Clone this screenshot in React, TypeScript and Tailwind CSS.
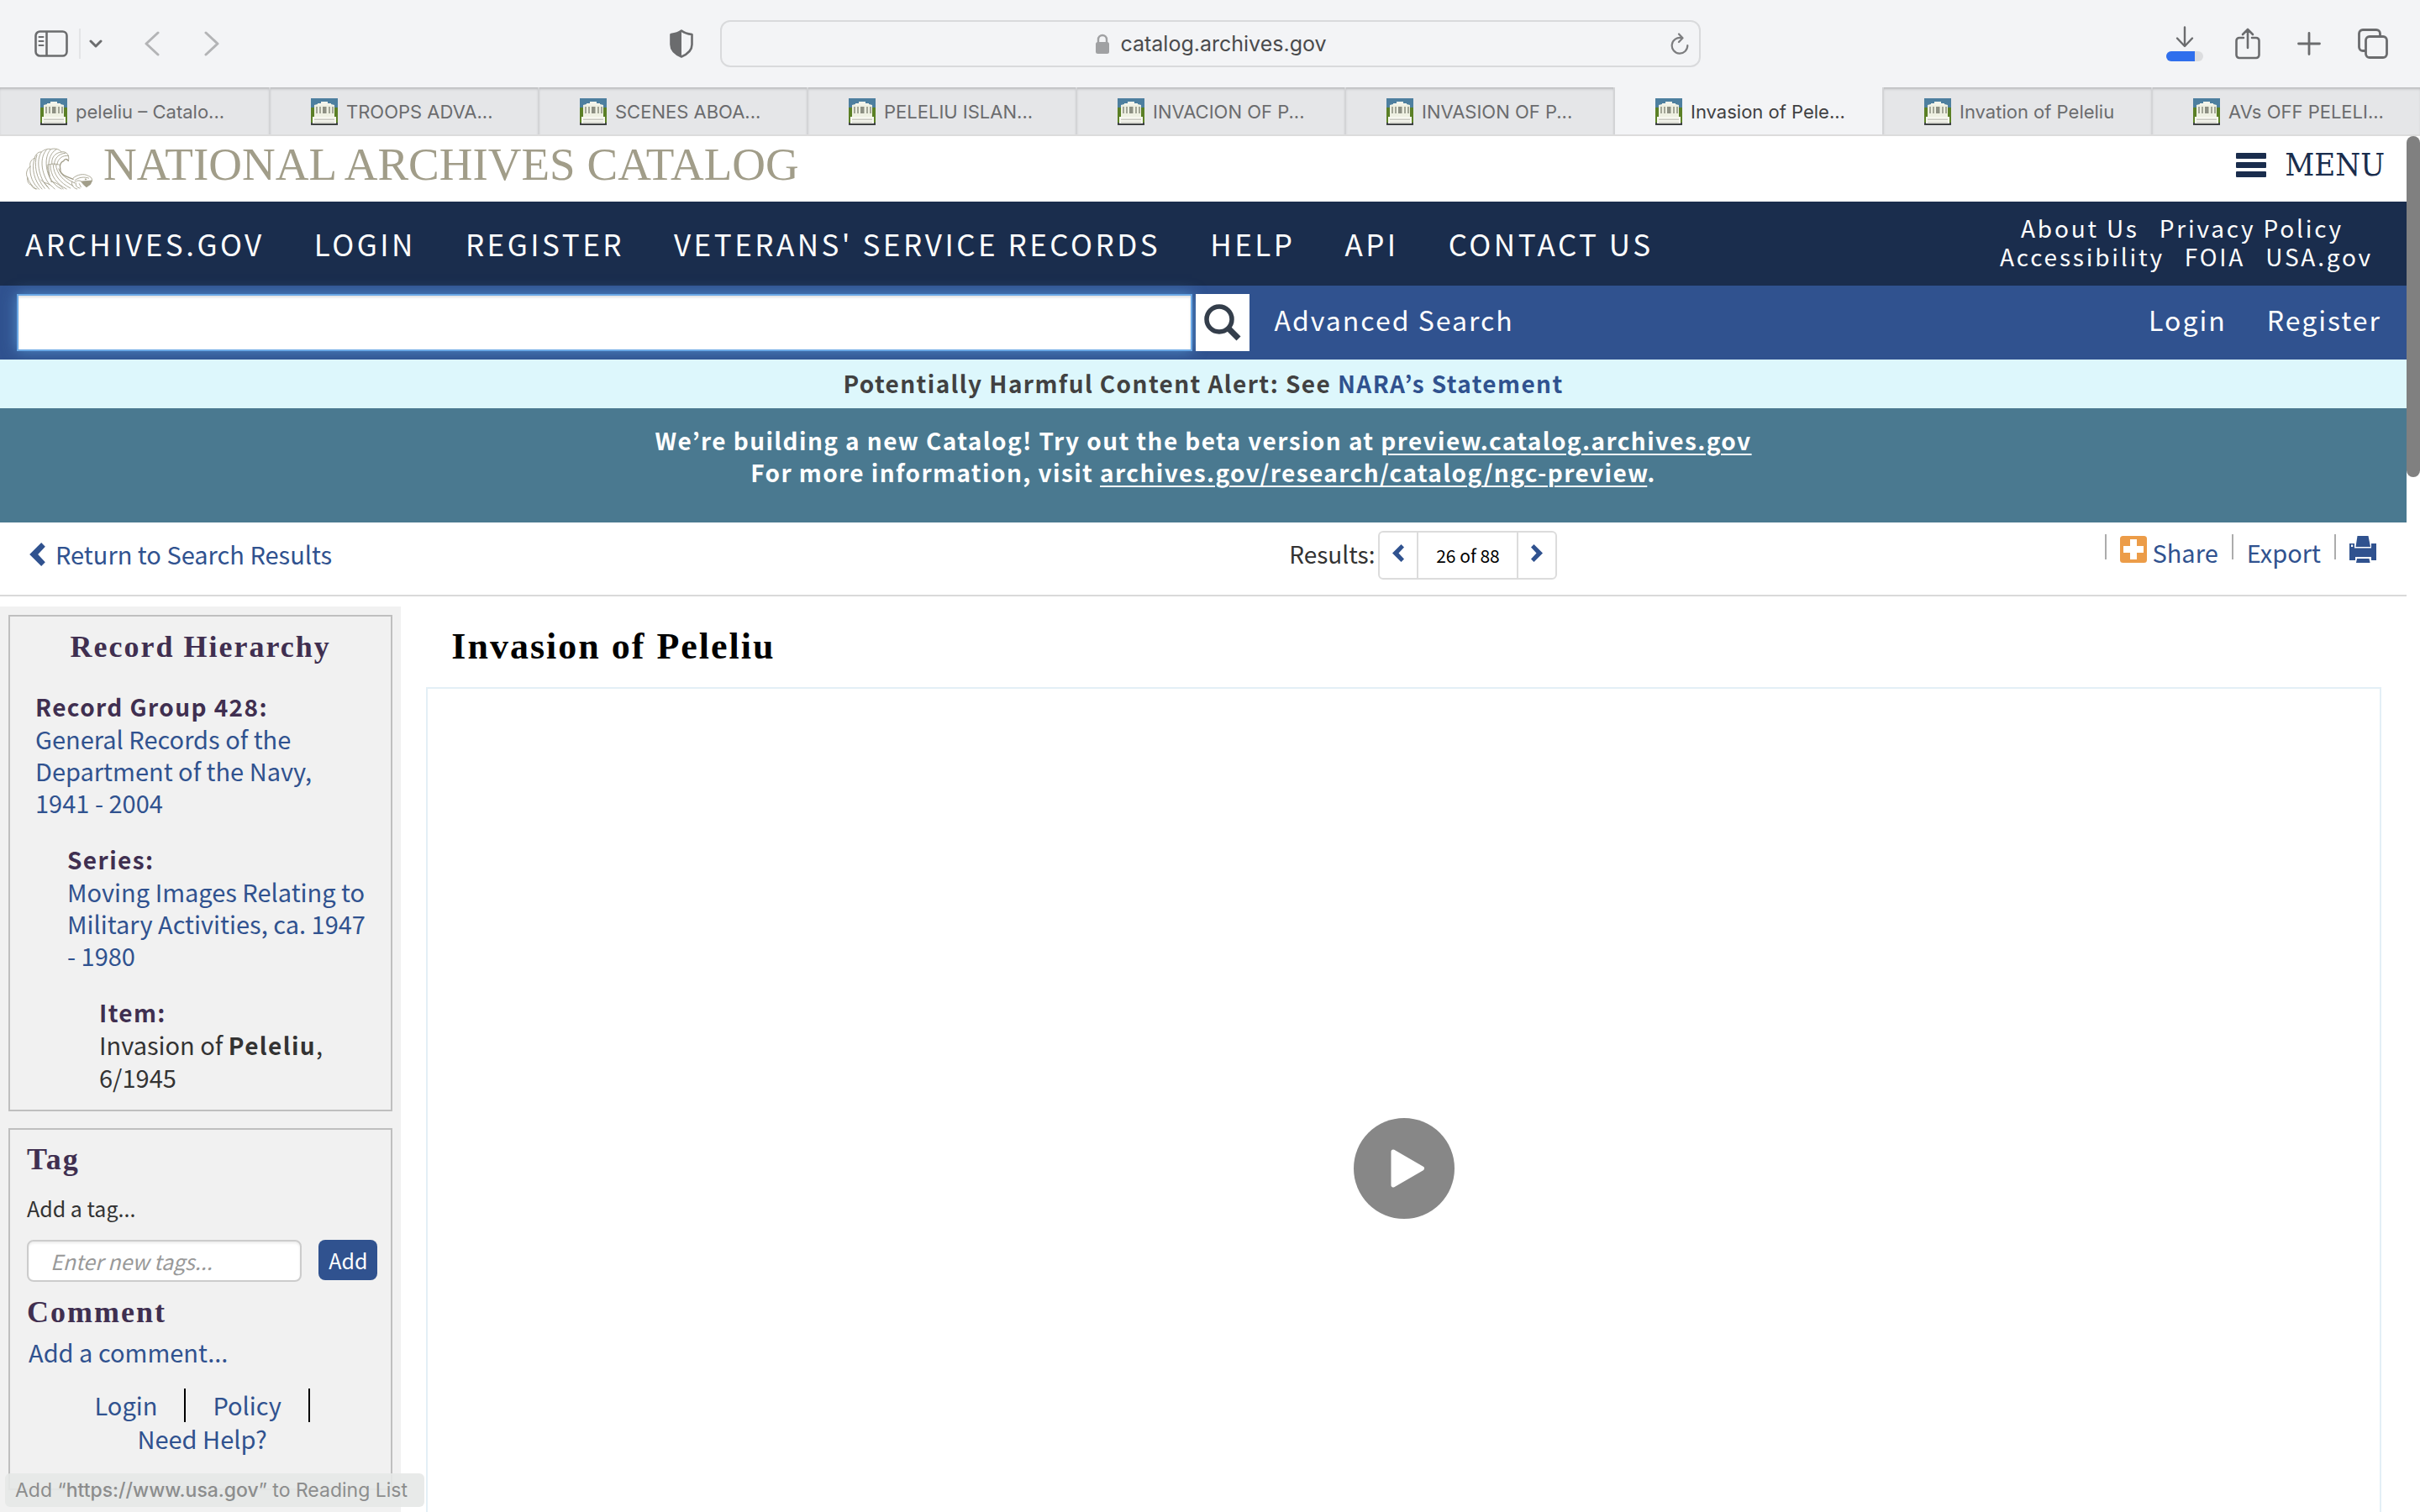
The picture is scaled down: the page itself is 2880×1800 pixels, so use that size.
import React from 'react';

const tabs = [
  'peleliu – Catalo...',
  'TROOPS ADVA...',
  'SCENES ABOA...',
  'PELELIU ISLAN...',
  'INVACION OF P...',
  'INVASION OF P...',
  'Invasion of Pele...',
  'Invation of Peleliu',
  'AVs OFF PELELI...',
];
const activeTab = 6;

const navLinks = ['ARCHIVES.GOV', 'LOGIN', 'REGISTER', "VETERANS' SERVICE RECORDS", 'HELP', 'API', 'CONTACT US'];

function Favicon() {
  return (
    <svg viewBox="0 0 32 32" className="size-8 shrink-0" aria-hidden="true">
      <rect width="32" height="32" fill="#4d7f9f" />
      <rect y="11" width="32" height="19" fill="#5b8026" />
      <rect y="29" width="32" height="3" fill="#3f4244" />
      <path d="M4 9V8l4-1V6h4V4h8v2h4v1l4 1v1z" fill="#f3f4ea" />
      <rect x="4" y="8" width="24" height="15" fill="#eef0e2" />
      <path d="M6 10h2v8H6zM10 10h2v8h-2zM21 10h2v8h-2zM25 10h2v8h-2z" fill="#a3a697" />
      <path d="M14 10h4.500v8H14z" fill="#8d9083" />
      <rect x="2" y="22" width="28" height="8" fill="#f6f7ef" />
      <path d="M4 24.500h24v1.500H4zM4 28h24v1H4z" fill="#c9cac2" />
    </svg>
  );
}

function EagleLogo() {
  return (
    <svg viewBox="28 222 244 154" className="h-[51px] w-[81px] shrink-0" fill="none" stroke="#a19d89" strokeWidth="2.600" strokeLinecap="round" aria-hidden="true">
      <path d="M183 272C189 250 174 236 158 240C150 228 130 226 120 230C108 226 92 234 86 240C72 238 62 254 62 262C50 266 42 280 46 292C34 300 28 318 36 332C34 344 40 358 50 358C52 368 60 372 70 373" />
      <path d="M140 230C112 246 106 284 116 326" />
      <path d="M120 230C98 250 96 304 124 348" />
      <path d="M104 233C80 256 82 316 116 358" />
      <path d="M86 240C66 268 74 330 108 366" />
      <path d="M70 250C58 284 66 334 98 371" />
      <path d="M62 262C48 296 60 345 88 373" />
      <path d="M46 292C42 325 56 355 78 374" />
      <path d="M36 332C42 350 54 364 66 373" />
      <path d="M158 240C134 242 120 262 124 284" />
      <path d="M172 244C146 246 132 264 132 286" />
      <path d="M183 254C162 250 144 264 142 286" />
      <path d="M106 288C118 280 140 282 150 286" />
      <path d="M108 292C108 330 130 360 158 373" />
      <path d="M118 286C118 326 142 356 176 373" />
      <path d="M128 286C130 322 152 350 190 370" />
      <path d="M138 286C140 316 164 344 200 362" />
      <path d="M148 300C152 318 176 338 206 352" />
      <path d="M96 350C112 352 124 362 134 373M84 340C96 350 108 362 114 373" />
      <path d="M120 346C140 350 156 360 164 373" />
      <path d="M183 272C176 262 168 266 166 272C154 276 150 290 154 302C152 312 162 324 176 328L200 338" strokeWidth="4" />
      <path d="M200 334C214 320 240 317 252 325C264 328 272 338 266 346" />
      <path d="M206 342C220 330 240 328 256 334M204 350C212 342 222 340 230 346" />
      <path d="M196 346C192 358 200 370 214 373M210 352C208 362 214 368 224 370M222 354L228 366" />
      <path d="M230 346L268 343L262 356L248 366L238 358Z" fill="#a19d89" />
      <circle cx="245" cy="338" r="2" fill="#a19d89" />
    </svg>
  );
}

function Chevron({ dir, className }: { dir: 'left' | 'right'; className: string }) {
  return (
    <svg viewBox="0 0 14 21" className={className} aria-hidden="true">
      {dir === 'left' ? (
        <path d="M10.500 0L14 3.500L7.500 10.500L14 17.500L10.500 21L0 10.500Z" fill="#30528f" />
      ) : (
        <path d="M3.500 0L0 3.500L6.500 10.500L0 17.500L3.500 21L14 10.500Z" fill="#30528f" />
      )}
    </svg>
  );
}

function BrowserToolbar() {
  return (
    <header className="flex h-[104px] shrink-0 items-center bg-[#f3f4f6] px-[38px] text-[#6b6c6e]">
      <div className="flex flex-1 items-center">
        <button aria-label="Show sidebar" className="flex w-[46px] justify-center">
          <svg viewBox="0 0 40 32" className="h-8 w-10" fill="none" stroke="currentColor" strokeWidth="2.600">
            <rect x="1.500" y="1.500" width="37" height="29" rx="5" />
            <path d="M14.500 1.500v29" />
            <path d="M5.500 8h5M5.500 13h5M5.500 18h5" strokeWidth="2" strokeLinecap="round" />
          </svg>
        </button>
        <span className="ml-2.5 h-9 w-0.5 bg-[#e3e4e6]" />
        <button aria-label="Sidebar options" className="ml-2.5">
          <svg viewBox="0 0 16 10" className="h-2.5 w-4" fill="none" stroke="currentColor" strokeWidth="3" strokeLinecap="round" strokeLinejoin="round">
            <path d="M2 2l6 6 6-6" />
          </svg>
        </button>
        <button aria-label="Back" className="ml-[50px]">
          <svg viewBox="0 0 18 30" className="h-[30px] w-[18px]" fill="none" stroke="#b3b4b6" strokeWidth="3" strokeLinecap="round" strokeLinejoin="round">
            <path d="M16 2L2 15l14 13" />
          </svg>
        </button>
        <button aria-label="Forward" className="ml-[53px]">
          <svg viewBox="0 0 18 30" className="h-[30px] w-[18px]" fill="none" stroke="#b3b4b6" strokeWidth="3" strokeLinecap="round" strokeLinejoin="round">
            <path d="M2 2l14 13L2 28" />
          </svg>
        </button>
        <button aria-label="Privacy report" className="mr-8 ml-auto">
          <svg viewBox="0 0 28 34" className="h-[34px] w-7">
            <path d="M14 1.500C17 4 22 5.500 26.500 6V18C26.500 25 21 29.500 14 32.500C7 29.500 1.500 25 1.500 18V6C6 5.500 11 4 14 1.500Z" fill="none" stroke="currentColor" strokeWidth="2.600" strokeLinejoin="round" />
            <path d="M14 1.500V32.500C7 29.500 1.500 25 1.500 18V6C6 5.500 11 4 14 1.500Z" fill="currentColor" />
          </svg>
        </button>
      </div>
      <div className="flex h-14 w-[1167px] items-center rounded-xl border-2 border-[#d9dadc] px-3">
        <div className="flex flex-1 items-center justify-center gap-3 pl-6">
          <svg viewBox="0 0 18 24" className="h-6 w-[18px]" aria-hidden="true">
            <path d="M4 11V7a5 5 0 0 1 10 0v4" fill="none" stroke="#a0a1a3" strokeWidth="2.400" />
            <rect x="1" y="10" width="16" height="14" rx="2.500" fill="#a0a1a3" />
          </svg>
          <span className="text-[25px] leading-8 text-[#4a4b4d]">catalog.archives.gov</span>
        </div>
        <button aria-label="Reload">
          <svg viewBox="0 0 22 26" className="h-[26px] w-[22px]" fill="none" stroke="#7c7d7f" strokeWidth="2.200" strokeLinecap="round" strokeLinejoin="round">
            <path d="M13 6.200A9.300 9.300 0 1 0 20.300 15M10 1.500L14.500 6.300L10 11" />
          </svg>
        </button>
      </div>
      <div className="flex flex-1 items-center justify-end gap-11">
        <button aria-label="Downloads" className="-mr-1.5 flex flex-col items-center gap-1">
          <svg viewBox="0 0 22 26" className="h-[26px] w-[22px]" fill="none" stroke="currentColor" strokeWidth="2.400" strokeLinecap="round" strokeLinejoin="round">
            <path d="M11 1.500v22M2 14.500l9 9.500 9-9.500" />
          </svg>
          <span className="flex h-3 w-11 overflow-hidden rounded-full bg-[#dcdddf]">
            <span className="w-[34px] bg-[#2f6fed]" />
          </span>
        </button>
        <button aria-label="Share page">
          <svg viewBox="0 0 30 38" className="h-[38px] w-[30px]" fill="none" stroke="currentColor" strokeWidth="2.600" strokeLinecap="round" strokeLinejoin="round">
            <path d="M10 12H5a3.500 3.500 0 0 0-3.500 3.500v17A3.500 3.500 0 0 0 5 36h20a3.500 3.500 0 0 0 3.500-3.500v-17A3.500 3.500 0 0 0 25 12h-5M15 24V2M9 8l6-6 6 6" />
          </svg>
        </button>
        <button aria-label="New tab">
          <svg viewBox="0 0 28 28" className="size-7" fill="none" stroke="currentColor" strokeWidth="2.800" strokeLinecap="round">
            <path d="M14 1.500v25M1.500 14h25" />
          </svg>
        </button>
        <button aria-label="Show all tabs">
          <svg viewBox="0 0 36 36" className="size-9" fill="none" stroke="currentColor" strokeWidth="2.800" strokeLinejoin="round">
            <rect x="9.500" y="9.500" width="25" height="25" rx="4.500" />
            <path d="M9.500 26.500H6A4.500 4.500 0 0 1 1.500 22V6A4.500 4.500 0 0 1 6 1.500h16A4.500 4.500 0 0 1 26.500 6v3.500" />
          </svg>
        </button>
      </div>
    </header>
  );
}

function TabBar() {
  return (
    <nav aria-label="Tabs" className="grid h-[58px] shrink-0 grid-cols-9 border-b-2 border-[#dcdcdc] text-[22px] leading-8">
      {tabs.map((t, i) => (
        <button
          key={t}
          className={
            i === activeTab
              ? 'flex items-center gap-2.5 border-l-2 border-[#d3d4d6] bg-[#f3f4f6] pt-0.5 pl-12 whitespace-nowrap text-[#3f4042] first:border-l-0'
              : 'flex items-center gap-2.5 border-l-2 border-[#d3d4d6] bg-[#e5e6e8] pt-0.5 pl-12 whitespace-nowrap text-[#6b6c6e] shadow-[inset_0_3px_3px_-1px_#b9babc] first:border-l-0'
          }
        >
          <Favicon />
          {t}
        </button>
      ))}
    </nav>
  );
}

function SiteHeader() {
  return (
    <>
      <div className="flex h-[78px] items-start justify-between pr-[26px] pl-[30px]">
        <a href="#home" className="flex items-start pt-[13px] text-[#a19d89]">
          <EagleLogo />
          <span className="ml-3 font-['Liberation_Serif',serif] text-[55px] leading-[42px]">NATIONAL ARCHIVES CATALOG</span>
        </a>
        <button className="flex items-center gap-[22px] pt-2.5 text-[#1a2d4d]">
          <span className="flex w-9 flex-col gap-1">
            <span className="h-[7px] rounded-[1px] bg-[#1a2d4d]" />
            <span className="h-[7px] rounded-[1px] bg-[#1a2d4d]" />
            <span className="h-[7px] rounded-[1px] bg-[#1a2d4d]" />
          </span>
          <span className="font-['DejaVu_Serif_Condensed','DejaVu_Serif',serif] text-[38px] leading-[48px]">MENU</span>
        </button>
      </div>
      <nav className="flex h-[100px] items-center justify-between bg-[#1a2d4d] pr-10 pl-[30px] text-white">
        <ul className="flex gap-[59px] text-[35px] leading-[44px] tracking-widest">
          {navLinks.map((l) => (
            <li key={l}>
              <a href="#nav">{l}</a>
            </li>
          ))}
        </ul>
        <div className="flex flex-col items-center pb-1 text-[28px] leading-[34px] tracking-widest">
          <div className="flex gap-6 pr-2.5">
            <a href="#about">About Us</a>
            <a href="#privacy">Privacy Policy</a>
          </div>
          <div className="flex gap-6">
            <a href="#accessibility">Accessibility</a>
            <a href="#foia">FOIA</a>
            <a href="#usa">USA.gov</a>
          </div>
        </div>
      </nav>
      <form className="flex h-[88px] items-center bg-[#30528f] pr-[30px] pl-5 text-[32px] leading-10 tracking-[2px] text-white" onSubmit={(e) => e.preventDefault()}>
        <input
          aria-label="Search the catalog"
          className="h-[68px] w-[49.7%] border-2 border-[#6ba8e5] bg-white px-4 text-[#333333] shadow-[0_0_16px_rgba(102,175,233,0.6),inset_0_2px_3px_rgba(0,0,0,0.12)] outline-none"
        />
        <button aria-label="Search" className="ml-1 flex h-[68px] w-16 items-center justify-center bg-white">
          <svg viewBox="0 0 44 44" className="size-11" fill="none" stroke="#343e4b" aria-hidden="true">
            <circle cx="18" cy="18" r="15" strokeWidth="5.500" />
            <path d="M28 28L41 41" strokeWidth="7" />
          </svg>
        </button>
        <a href="#advanced" className="ml-[30px] pb-2">Advanced Search</a>
        <div className="ml-auto flex gap-12 pb-2">
          <a href="#login">Login</a>
          <a href="#register">Register</a>
        </div>
      </form>
      <p className="h-[58px] bg-[#ddf7fc] text-center text-[28px] leading-[56px] font-bold tracking-wider text-[#414141]">
        Potentially Harmful Content Alert: See <a href="#statement" className="text-[#30528f]">NARA’s Statement</a>
      </p>
      <p className="h-[136px] bg-[#4a7990] pt-[19px] text-center text-[28px] leading-[38px] font-bold tracking-wider text-white">
        We’re building a new Catalog! Try out the beta version at <a href="#preview" className="underline decoration-2 underline-offset-4">preview.catalog.archives.gov</a>
        <br />
        For more information, visit <a href="#ngc" className="underline decoration-2 underline-offset-4">archives.gov/research/catalog/ngc-preview</a>.
      </p>
    </>
  );
}

function ResultsBar() {
  return (
    <div className="grid h-[88px] grid-cols-[15fr_13fr] border-b-2 border-[#d9d9d9] text-[29px] leading-[38px]">
      <a href="#results" className="flex items-start gap-3 pt-[18px] pl-[35px] text-[#30528f]">
        <Chevron dir="left" className="mt-1.5 h-[28px] w-[19px]" />
        Return to Search Results
      </a>
      <div className="flex items-start justify-between pr-9">
        <div className="flex items-start pt-2.5">
          <span className="pt-2 pr-1 text-[28px] text-[#333333]">Results:</span>
          <div className="flex h-[58px] rounded-md border-2 border-[#dcdcdc]">
            <button aria-label="Previous result" className="flex w-11 justify-center pt-3.5">
              <Chevron dir="left" className="h-[21px] w-3.5" />
            </button>
            <span className="w-[121px] border-x-2 border-[#dcdcdc] pt-2 text-center text-[21px] text-black">26 of 88</span>
            <button aria-label="Next result" className="flex w-11 justify-center pt-3.5">
              <Chevron dir="right" className="h-[21px] w-3.5" />
            </button>
          </div>
        </div>
        <div className="flex items-start pt-3.5 text-[#30528f]">
          <span className="h-[30px] w-0.5 bg-[#acacac]" />
          <button className="ml-4 flex items-start gap-1.5">
            <svg viewBox="0 0 32 32" className="mt-0.5 size-8" aria-hidden="true">
              <rect width="32" height="32" rx="3.500" fill="#ec9c48" />
              <path d="M12 4h8v8h8v8h-8v8h-8v-8H4v-8h8z" fill="#fff" />
            </svg>
            <span className="pt-0.5">Share</span>
          </button>
          <span className="ml-4 h-[30px] w-0.5 bg-[#acacac]" />
          <button className="ml-4 pt-0.5">Export</button>
          <span className="ml-4 h-[30px] w-0.5 bg-[#acacac]" />
          <button aria-label="Print" className="mt-0.5 ml-4">
            <svg viewBox="0 0 32 32" className="size-8" fill="#30528f">
              <path d="M9.500 0h13l2.500 13H7.500z" />
              <path fillRule="evenodd" d="M0 9h6v5.500h20V9h6v20h-6v-4H7v4H0zM2 10.500v2.500h2.200v-2.500z" />
              <path d="M9 27h14.500l1 5H8z" />
            </svg>
          </button>
        </div>
      </div>
    </div>
  );
}

function HierarchyLabel({ children }: { children: React.ReactNode }) {
  return <h3 className="text-[28px] font-bold tracking-wider text-[#402f50]">{children}</h3>;
}

const sideHeading = "font-['Liberation_Serif',serif] text-[36px] leading-[48px] font-bold tracking-[2px] text-[#402f50]";

function Sidebar() {
  return (
    <aside className="w-1/6 shrink-0 bg-[#f1f1f1] p-2.5 text-[29px] leading-[38px]">
      <section className="flex flex-col gap-[30px] border-2 border-[#bfbfbf] px-[30px] pb-5">
        <h2 className={`${sideHeading} -mb-0.5 pt-3 text-center`}>Record Hierarchy</h2>
        <div>
          <HierarchyLabel>Record Group 428:</HierarchyLabel>
          <a href="#group" className="text-[#30528f]">General Records of the Department of the Navy, <span className="whitespace-nowrap">1941 - 2004</span></a>
        </div>
        <div className="pl-[38px]">
          <HierarchyLabel>Series:</HierarchyLabel>
          <a href="#series" className="text-[#30528f]">Moving Images Relating to Military Activities, ca. 1947 <span className="whitespace-nowrap">- 1980</span></a>
        </div>
        <div className="pl-[76px] text-[#333333]">
          <HierarchyLabel>Item:</HierarchyLabel>
          Invasion of <b className="text-[28px] tracking-wider">Peleliu</b>, 6/1945
        </div>
      </section>
      <section className="mt-5 h-[431px] border-2 border-[#bfbfbf] pr-4 pl-5">
        <h2 className={`${sideHeading} pt-[11px]`}>Tag</h2>
        <label htmlFor="tag" className="mt-[15px] block text-[25px] text-[#333333]">Add a tag...</label>
        <div className="mt-[19px] flex justify-between gap-5">
          <input
            id="tag"
            placeholder="Enter new tags..."
            className="h-[50px] w-full min-w-0 rounded-lg border-2 border-[#cccccc] bg-white pl-[26px] text-[25px] shadow-[inset_0_2px_3px_rgba(0,0,0,0.08)] placeholder:text-[#999999] placeholder:italic"
          />
          <button className="h-12 w-[70px] shrink-0 rounded-lg bg-[#30528f] text-[25px] text-white">Add</button>
        </div>
        <h2 className={`${sideHeading} mt-3`}>Comment</h2>
        <a href="#comment" className="mt-1 ml-0.5 block text-[#30528f]">Add a comment...</a>
        <div className="mt-[25px] flex justify-center gap-8 text-[#30528f]">
          <a href="#login">Login</a>
          <span className="h-10 w-0.5 bg-black" />
          <a href="#policy">Policy</a>
          <span className="h-10 w-0.5 bg-black" />
        </div>
        <a href="#help" className="block text-center text-[#30528f]">Need Help?</a>
      </section>
    </aside>
  );
}

export default function App() {
  return (
    <div className="flex h-screen flex-col overflow-hidden bg-white font-['Inter',sans-serif]">
      <BrowserToolbar />
      <TabBar />
      <main className="relative flex min-h-0 flex-1 flex-col overflow-hidden pr-4 font-['Noto_Sans_CJK_KR','Noto_Sans',sans-serif]">
        <SiteHeader />
        <ResultsBar />
        <div className="flex min-h-0 flex-1 pt-3">
          <Sidebar />
          <article className="flex-1 px-[30px]">
            <h1 className="pt-[21px] pl-[30px] font-['Liberation_Serif',serif] text-[44px] leading-[54px] font-bold tracking-[2px] text-black">Invasion of Peleliu</h1>
            <div className="mt-[21px] flex h-[1146px] items-center justify-center border-2 border-[#e3eff6]">
              <button aria-label="Play video" className="flex size-[120px] items-center justify-center rounded-full bg-[#878787]">
                <svg viewBox="0 0 40 46" className="ml-2 h-[46px] w-10" aria-hidden="true">
                  <path d="M3 3L37.500 23L3 43Z" fill="#fff" stroke="#fff" strokeWidth="5" strokeLinejoin="round" />
                </svg>
              </button>
            </div>
          </article>
        </div>
        <div className="absolute top-0 right-0 h-[406px] w-4 rounded-full bg-[#808080]" />
        <div className="absolute bottom-1.5 left-1.5 rounded-md bg-[#e6e8e7]/90 pr-5 pl-3 font-['Inter',sans-serif] text-[23px] leading-10 text-[#8c8d8d]">
          Add “<span className="font-medium">https://www.usa.gov</span>” to Reading List
        </div>
      </main>
    </div>
  );
}
